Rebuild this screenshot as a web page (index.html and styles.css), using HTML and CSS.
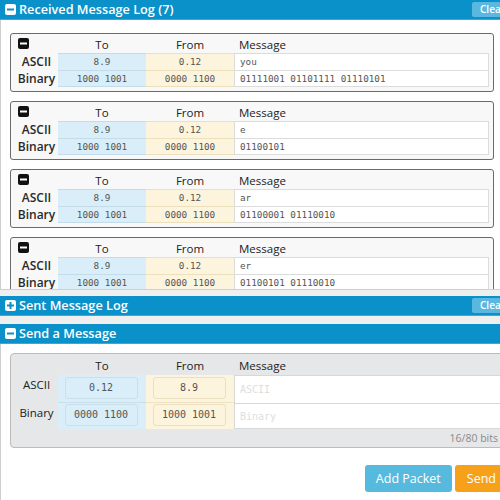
FILE: index.html
```html
<!DOCTYPE html>
<html>
<head>
<meta charset="utf-8">
<link rel="stylesheet" href="styles.css">
</head>
<body>
<div class="page">
  <section class="panel">
    <div class="bar">
      <svg class="ico" width="11" height="11" viewBox="0 0 11 11"><rect width="11" height="11" rx="2" fill="#fff"/><rect x="2" y="4.5" width="7" height="2" fill="#0b91c9"/></svg>
      <span class="title">Received Message Log (7)</span>
      <span class="clear">Clear</span>
    </div>
    <div class="pbody scroll">
      <div class="card">
        <div class="cg">
          <div class="hd ic"><svg width="11" height="11" viewBox="0 0 11 11"><rect width="11" height="11" rx="2" fill="#111"/><rect x="2" y="4.5" width="7" height="2" fill="#fff"/></svg></div>
          <div class="hd">To</div><div class="hd">From</div><div class="hd msg">Message</div>
          <div class="lb">ASCII</div><div class="c to">8.9</div><div class="c fr">0.12</div><div class="c m">you</div>
          <div class="lb">Binary</div><div class="c to last">1000 1001</div><div class="c fr last">0000 1100</div><div class="c m last">01111001 01101111 01110101</div>
        </div>
      </div>
      <div class="card">
        <div class="cg">
          <div class="hd ic"><svg width="11" height="11" viewBox="0 0 11 11"><rect width="11" height="11" rx="2" fill="#111"/><rect x="2" y="4.5" width="7" height="2" fill="#fff"/></svg></div>
          <div class="hd">To</div><div class="hd">From</div><div class="hd msg">Message</div>
          <div class="lb">ASCII</div><div class="c to">8.9</div><div class="c fr">0.12</div><div class="c m">e</div>
          <div class="lb">Binary</div><div class="c to last">1000 1001</div><div class="c fr last">0000 1100</div><div class="c m last">01100101</div>
        </div>
      </div>
      <div class="card">
        <div class="cg">
          <div class="hd ic"><svg width="11" height="11" viewBox="0 0 11 11"><rect width="11" height="11" rx="2" fill="#111"/><rect x="2" y="4.5" width="7" height="2" fill="#fff"/></svg></div>
          <div class="hd">To</div><div class="hd">From</div><div class="hd msg">Message</div>
          <div class="lb">ASCII</div><div class="c to">8.9</div><div class="c fr">0.12</div><div class="c m">ar</div>
          <div class="lb">Binary</div><div class="c to last">1000 1001</div><div class="c fr last">0000 1100</div><div class="c m last">01100001 01110010</div>
        </div>
      </div>
      <div class="card">
        <div class="cg">
          <div class="hd ic"><svg width="11" height="11" viewBox="0 0 11 11"><rect width="11" height="11" rx="2" fill="#111"/><rect x="2" y="4.5" width="7" height="2" fill="#fff"/></svg></div>
          <div class="hd">To</div><div class="hd">From</div><div class="hd msg">Message</div>
          <div class="lb">ASCII</div><div class="c to">8.9</div><div class="c fr">0.12</div><div class="c m">er</div>
          <div class="lb">Binary</div><div class="c to last">1000 1001</div><div class="c fr last">0000 1100</div><div class="c m last">01100101 01110010</div>
        </div>
      </div>
    </div>
  </section>

  <section class="panel gap8">
    <div class="bar">
      <svg class="ico" width="11" height="11" viewBox="0 0 11 11"><rect width="11" height="11" rx="2" fill="#fff"/><rect x="2" y="4.5" width="7" height="2" fill="#0b91c9"/><rect x="4.5" y="2" width="2" height="7" fill="#0b91c9"/></svg>
      <span class="title">Sent Message Log</span>
      <span class="clear">Clear</span>
    </div>
  </section>

  <section class="panel">
    <div class="bar">
      <svg class="ico" width="11" height="11" viewBox="0 0 11 11"><rect width="11" height="11" rx="2" fill="#fff"/><rect x="2" y="4.5" width="7" height="2" fill="#0b91c9"/></svg>
      <span class="title">Send a Message</span>
    </div>
    <div class="pbody send">
      <div class="sbox">
        <div class="sg">
          <div class="hd"></div><div class="hd">To</div><div class="hd">From</div><div class="hd msg">Message</div>
          <div class="slb">ASCII</div>
          <div class="sc to"><div class="inp">0.12</div></div>
          <div class="sc fr"><div class="inp">8.9</div></div>
          <div class="sc m"><span class="ph">ASCII</span></div>
          <div class="slb">Binary</div>
          <div class="sc to last"><div class="inp">0000 1100</div></div>
          <div class="sc fr last"><div class="inp">1000 1001</div></div>
          <div class="sc m last"><span class="ph">Binary</span></div>
        </div>
        <div class="bits">16/80 bits</div>
      </div>
      <div class="actions">
        <span class="btn add">Add Packet</span>
        <span class="btn send-btn">Send</span>
      </div>
    </div>
  </section>
</div>
</body>
</html>
```

FILE: styles.css
```css
html, body {
  margin: 0;
  padding: 0;
  overflow: hidden;
}
body {
  width: 500px;
  height: 500px;
  background: #efefef;
  font-family: "Open Sans", "Liberation Sans", sans-serif;
  color: #222;
}
.page {
  width: 520px;
}
.panel {
  margin-bottom: 6px;
}
.panel.gap8 {
  margin-bottom: 8px;
}
.bar {
  height: 19px;
  background: #0b91c9;
  border-bottom: 1px solid #3ea7d6;
  display: flex;
  align-items: center;
  padding: 0 3px 0 5px;
  color: #fff;
}
.bar .ico {
  flex: none;
  margin-right: 3px;
}
.title {
  font-size: 12.7px;
  font-weight: 600;
  flex: 1;
  line-height: 19px;
}
.clear {
  background: #5ab7e0;
  color: #fff;
  font-size: 10px;
  font-weight: 600;
  height: 15px;
  line-height: 15px;
  padding: 0 8px;
  width: 29px;
  border-radius: 2px;
}
.pbody {
  background: #fff;
  border: 1px solid #cfcfcf;
  border-top: none;
}
.scroll {
  height: 256px;
  padding: 13px 25px 0 9px;
  overflow: hidden;
}
.card {
  background: #f8f8f8;
  border: 1px solid #6a6a6a;
  border-radius: 3px;
  padding: 0 4px 4px 4px;
  margin-bottom: 9px;
}
.cg {
  display: grid;
  grid-template-columns: 43px 88px 88px 1fr;
  grid-template-rows: 19px 17px 17px;
}
.hd {
  font-size: 11.5px;
  font-weight: 500;
  text-align: center;
  line-height: 17px;
  padding-top: 2px;
  color: #222;
}
.hd.msg {
  text-align: left;
  padding-left: 5px;
}
.hd.ic {
  text-align: left;
  padding-left: 3px;
  padding-top: 0;
  display: flex;
  align-items: center;
}
.lb {
  font-size: 12px;
  font-weight: 600;
  text-align: center;
  line-height: 17px;
  color: #2a2a2a;
}
.c {
  font-family: "DejaVu Sans Mono", "Liberation Mono", monospace;
  font-size: 9.3px;
  color: #555;
  line-height: 16px;
  text-align: center;
  border-top: 1px solid #cfe0ea;
}
.c.to { background: #d9eef8; border-top-color: #c2dcea; }
.c.fr { background: #fdf4dd; border-top-color: #ece0bd; }
.c.m {
  background: #fff;
  text-align: left;
  padding-left: 5px;
  border: 1px solid #dcdcdc;
  border-bottom: none;
}
.c.last { border-bottom: 1px solid #cfe0ea; line-height: 15px; }
.c.to.last { border-bottom-color: #c2dcea; }
.c.fr.last { border-bottom-color: #ece0bd; }
.c.m.last { border-bottom: 1px solid #dcdcdc; }

.send {
  padding: 9px 0 7px 9px;
  height: 141px;
}
.sbox {
  background: #e6e7e8;
  border: 1px solid #bcbcbc;
  border-radius: 4px;
  padding: 0 0 0 4px;
  width: 507px;
  height: 93px;
}
.sg {
  display: grid;
  grid-template-columns: 43px 88px 88px 1fr;
  grid-template-rows: 21px 28px 26px;
}
.sg .hd {
  line-height: 23px;
  padding-top: 0;
  height: 21px;
}
.slb {
  font-size: 11.5px;
  font-weight: 500;
  text-align: center;
  line-height: 18px;
  padding-top: 1px;
  color: #222;
}
.sc {
  display: flex;
  align-items: flex-start;
  justify-content: center;
  padding-top: 2px;
}
.sc.last { padding-top: 1px; }
.sc.to { background: #d9eef8; border-bottom: 1px solid #c8e0ec; }
.sc.fr { background: #fdf4dd; border-bottom: 1px solid #eee2c2; }
.sc.to.last, .sc.fr.last { border-bottom: none; }
.sc.m {
  background: #fff;
  justify-content: flex-start;
  align-items: center;
  padding-top: 0;
  border: 1px solid #d8d8d8;
  border-bottom: none;
  padding-left: 5px;
}
.sc.m.last { border-bottom: 1px solid #d8d8d8; }
.inp {
  width: 71px;
  height: 20px;
  border: 1px solid #cbdfe8;
  border-radius: 3px;
  font-family: "DejaVu Sans Mono", "Liberation Mono", monospace;
  font-size: 10px;
  color: #555;
  text-align: center;
  line-height: 20px;
  margin-left: -2px;
}
.sc.fr .inp { border-color: #eadfc0; }
.ph {
  font-family: "DejaVu Sans Mono", "Liberation Mono", monospace;
  font-size: 10px;
  color: #dedede;
}
.bits {
  text-align: right;
  font-size: 10.5px;
  color: #8a8a8a;
  padding-right: 24px;
  line-height: 18px;
}
.actions {
  display: flex;
  justify-content: flex-end;
  gap: 3px;
  margin-top: 17px;
  padding-right: 11px;
}
.btn {
  height: 27px;
  line-height: 27px;
  color: #fff;
  font-size: 12.5px;
  font-weight: 500;
  border-radius: 3px;
  padding: 0 11px;
  white-space: nowrap;
}
.add {
  background: #56bade;
}
.send-btn {
  background: #f7a11a;
  padding: 0 12px;
}
```
